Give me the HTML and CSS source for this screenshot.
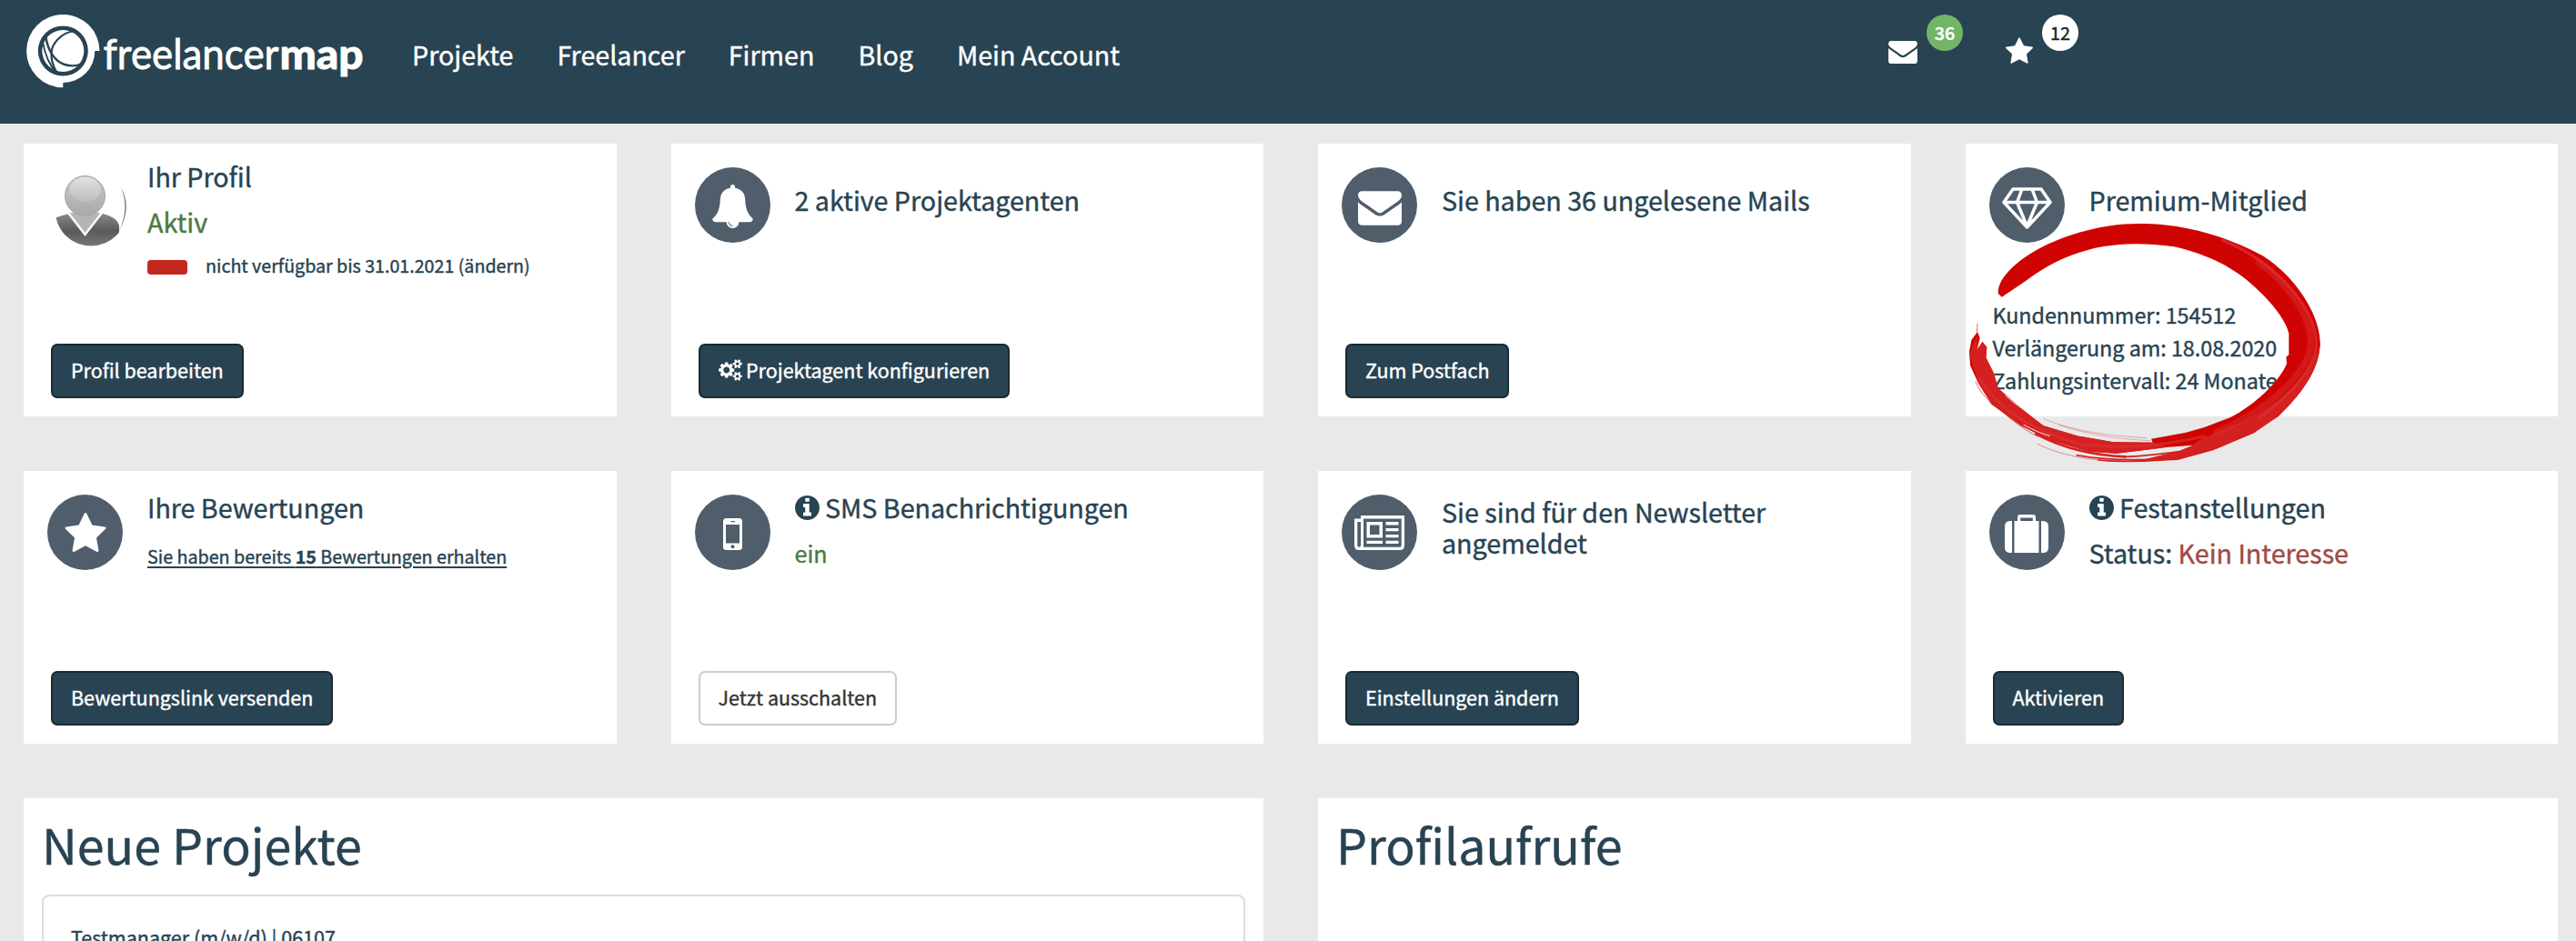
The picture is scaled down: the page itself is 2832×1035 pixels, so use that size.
FILE: index.html
```
<!DOCTYPE html>
<html lang="de">
<head>
    <meta charset="UTF-8">
    <meta name="viewport" content="width=device-width, initial-scale=1.0">
    <title>freelancermap - Mein Account</title>
    <link rel="stylesheet" href="styles.css">
</head>
<body>
    <svg class="symbols" aria-hidden="true">
        <symbol id="icon-envelope" viewBox="0 256 1792 1408"><path d="M1792 710v794q0 66-47 113t-113 47h-1472q-66 0-113-47t-47-113v-794q44 49 101 87 362 246 497 345 57 42 92.5 65.5t94.5 48 110 24.5h2q51 0 110-24.5t94.5-48 92.5-65.5q170-123 498-345 57-39 100-87zm0-294q0 79-49 151t-122 123q-376 261-468 325-10 7-42.5 31t-54 38.5-52 32.5-57.5 27-50 9h-2q-23 0-50-9t-57.5-27-52-32.5-54-38.5-42.5-31q-91-64-262-182.5t-205-142.5q-62-42-117-115.5t-55-136.5q0-78 41.5-130t118.5-52h1472q65 0 112.5 47t47.5 113z"/></symbol>
        <symbol id="icon-star" viewBox="64 32 1664 1587"><path d="M1728 647q0 22-26 48l-363 354 86 500q1 7 1 20 0 21-10.5 35.5t-30.5 14.5q-19 0-40-12l-449-236-449 236q-22 12-40 12-21 0-31.5-14.5t-10.5-35.5q0-6 2-20l86-500-364-354q-25-27-25-48 0-37 56-46l502-73 225-455q19-41 49-41t49 41l225 455 502 73q56 9 56 46z"/></symbol>
        <symbol id="icon-info" viewBox="128 128 1536 1536"><path d="M1152 1376v-160q0-14-9-23t-23-9h-96v-512q0-14-9-23t-23-9h-320q-14 0-23 9t-9 23v160q0 14 9 23t23 9h96v320h-96q-14 0-23 9t-9 23v160q0 14 9 23t23 9h448q14 0 23-9t9-23zm-128-896v-160q0-14-9-23t-23-9h-192q-14 0-23 9t-9 23v160q0 14 9 23t23 9h192q14 0 23-9t9-23zm640 416q0 209-103 385.5t-279.5 279.5-385.5 103-385.5-103-279.5-279.5-103-385.5 103-385.5 279.5-279.5 385.5-103 385.5 103 279.5 279.5 103 385.5z"/></symbol>
    </svg>

    <div class="page">
        <header class="header">
            <a class="logo" href="#">
                <svg width="380" height="90" viewBox="0 0 380 90">
                    <path fill="#fff" fill-rule="evenodd" d="M40.300 80.300A40.200 40.200 0 1 1 80.500 40H75.300A35 35 0 0 1 40.300 75ZM40.300 12.500a27.500 27.500 0 1 0 0 55a27.500 27.500 0 1 0 0-55Z"/>
                    <circle cx="40.300" cy="40" r="23" fill="#fff"/>
                    <g fill="none" stroke="#284352">
                        <path stroke-width="2.200" d="M53 18C38 20 28 32 27.500 42C27 52 30 58 33 63"/>
                        <path stroke-width="2.400" d="M21 22C23 40 32 52 42 55C49 57 55 57 61 54"/>
                        <path stroke-width="1.800" d="M18 30C20 42 24 54 33 64"/>
                    </g>
                    <g fill="#fff" class="logo-text">
                        <text x="84.500" y="60" font-size="47" textLength="193" lengthAdjust="spacingAndGlyphs" class="logo-thin">freelancer</text>
                        <text x="278.500" y="60" font-size="46" textLength="92" lengthAdjust="spacingAndGlyphs" class="logo-fat">map</text>
                    </g>
                </svg>
            </a>
            <nav class="nav">
                <a href="#">Projekte</a>
                <a href="#">Freelancer</a>
                <a href="#">Firmen</a>
                <a href="#">Blog</a>
                <a href="#">Mein Account</a>
            </nav>
            <div class="notifications">
                <a class="notification" href="#">
                    <svg class="icon-mail" width="32" height="25"><use href="#icon-envelope"/></svg>
                    <span class="badge badge-green">36</span>
                </a>
                <a class="notification" href="#">
                    <svg class="icon-fav" width="30" height="29"><use href="#icon-star"/></svg>
                    <span class="badge">12</span>
                </a>
            </div>
        </header>

        <main class="dashboard">
            <section class="card">
                <div class="card-head">
                    <svg class="avatar" width="88" height="88" viewBox="0 0 88 88">
                        <defs>
                            <clipPath id="avatarClip"><circle cx="48" cy="47" r="39.500"/></clipPath>
                            <linearGradient id="headFill" x1="0" y1="0" x2="0" y2="1">
                                <stop offset="0" stop-color="#c9c9c9"/>
                                <stop offset="1" stop-color="#a9a9a9"/>
                            </linearGradient>
                            <linearGradient id="bodyFill" x1="0" y1="0" x2="0" y2="1">
                                <stop offset="0" stop-color="#8b8b8b"/>
                                <stop offset=".5" stop-color="#5a5a5a"/>
                                <stop offset="1" stop-color="#7d7d7d"/>
                            </linearGradient>
                            <linearGradient id="shineFill" x1="0" y1="0" x2="0" y2="1">
                                <stop offset="0" stop-color="#e2e2e2"/>
                                <stop offset="1" stop-color="#bdbdbd"/>
                            </linearGradient>
                        </defs>
                        <g clip-path="url(#avatarClip)">
                            <path fill="url(#bodyFill)" d="M5 58C12 53 20 53 26 50H58C66 53 76 54 79 64V90H5Z"/>
                            <path fill="#b5b5b5" stroke="#fff" stroke-width="2.500" d="M23 50L41.500 74L60 50"/>
                        </g>
                        <circle cx="41.500" cy="31.500" r="22" fill="url(#headFill)" stroke="#a5a5a5"/>
                        <ellipse cx="41.500" cy="24.500" rx="17" ry="13.500" fill="url(#shineFill)"/>
                        <path fill="#7a7a7a" d="M81 22Q93.500 44 79 70Q90.500 45 81 22Z"/>
                    </svg>
                    <div class="card-text text-profile">
                        <h3>Ihr Profil</h3>
                        <h3 class="green">Aktiv</h3>
                        <div class="availability">
                            <span class="pill"></span>
                            <span>nicht verfügbar bis 31.01.2021 (ändern)</span>
                        </div>
                    </div>
                </div>
                <a class="btn" href="#">Profil bearbeiten</a>
            </section>

            <section class="card">
                <div class="card-head">
                    <span class="circle">
                        <svg class="low" width="45" height="48" viewBox="64 0 1664 1792"><path d="M912 1696q0-16-16-16-59 0-101.500-42.500t-42.500-101.500q0-16-16-16t-16 16q0 73 51.500 124.500t124.500 51.500q16 0 16-16zm816-288q0 52-38 90t-90 38h-448q0 106-75 181t-181 75-181-75-75-181h-448q-52 0-90-38t-38-90q50-42 91-88t85-119.500 74.500-158.500 50-206 19.500-260q0-152 117-282.500t307-158.500q-8-19-8-39 0-40 28-68t68-28 68 28 28 68q0 20-8 39 190 28 307 158.500t117 282.500q0 139 19.500 260t50 206 74.500 158.500 85 119.500 91 88z"/></svg>
                    </span>
                    <div class="card-text text-single"><h3>2 aktive Projektagenten</h3></div>
                </div>
                <a class="btn" href="#"><svg class="cogs" width="26" height="24" viewBox="-64 0 1920 1792"><path d="M832 896q0-106-75-181t-181-75-181 75-75 181 75 181 181 75 181-75 75-181zm768 512q0-52-38-90t-90-38-90 38-38 90q0 53 37.500 90.500t90.500 37.500 90.500-37.500 37.500-90.500zm0-1024q0-52-38-90t-90-38-90 38-38 90q0 53 37.500 90.500t90.500 37.500 90.500-37.500 37.500-90.500zm-384 421v185q0 10-7 19.500t-16 10.500l-155 24q-11 35-32 76 34 48 90 115 7 11 7 20 0 12-7 19-23 30-82.500 89.500t-78.500 59.500q-11 0-21-7l-115-90q-37 19-77 31-11 108-23 155-7 24-30 24h-186q-11 0-20-7.500t-10-17.500l-23-153q-34-10-75-31l-118 89q-7 7-20 7-11 0-21-8-144-133-144-160 0-9 7-19 10-14 41-53t47-61q-23-44-35-82l-152-24q-10-1-17-9.500t-7-19.500v-185q0-10 7-19.500t16-10.500l155-24q11-35 32-76-34-48-90-115-7-11-7-20 0-12 7-20 22-30 82-89t79-59q11 0 21 7l115 90q34-18 77-32 11-108 23-154 7-24 30-24h186q11 0 20 7.500t10 17.500l23 153q34 10 75 31l118-89q8-7 20-7 11 0 21 8 144 133 144 160 0 8-7 19-12 16-42 54t-45 60q23 48 34 82l152 23q10 2 17 10.500t7 19.500zm640 533v140q0 16-149 31-12 27-30 52 51 113 51 138 0 4-4 7-122 71-124 71-8 0-46-47t-52-68q-20 2-30 2t-30-2q-14 21-52 68t-46 47q-2 0-124-71-4-3-4-7 0-25 51-138-18-25-30-52-149-15-149-31v-140q0-16 149-31 13-29 30-52-51-113-51-138 0-4 4-7 4-2 35-20t59-34 30-16q8 0 46 46.500t52 67.500q20-2 30-2t30 2q51-71 92-112l6-2q4 0 124 70 4 3 4 7 0 25-51 138 17 23 30 52 149 15 149 31zm0-1024v140q0 16-149 31-12 27-30 52 51 113 51 138 0 4-4 7-122 71-124 71-8 0-46-47t-52-68q-20 2-30 2t-30-2q-14 21-52 68t-46 47q-2 0-124-71-4-3-4-7 0-25 51-138-18-25-30-52-149-15-149-31v-140q0-16 149-31 13-29 30-52-51-113-51-138 0-4 4-7 4-2 35-20t59-34 30-16q8 0 46 46.500t52 67.500q20-2 30-2t30 2q51-71 92-112l6-2q4 0 124 70 4 3 4 7 0 25-51 138 17 23 30 52 149 15 149 31z"/></svg>Projektagent konfigurieren</a>
            </section>

            <section class="card">
                <div class="card-head">
                    <span class="circle"><svg class="lower" width="48" height="38"><use href="#icon-envelope"/></svg></span>
                    <div class="card-text text-single"><h3>Sie haben 36 ungelesene Mails</h3></div>
                </div>
                <a class="btn" href="#">Zum Postfach</a>
            </section>

            <section class="card card-premium">
                <div class="card-head">
                    <span class="circle">
                        <svg class="lower" width="55" height="46" viewBox="0 0 55 46">
                            <path fill="none" stroke="#fff" stroke-width="3.500" stroke-linejoin="round" d="M12 2H43L53 16.500L27.500 44L2 16.500ZM2 16.500H53M22 2L16.500 16.500L27.500 43L38.500 16.500L33 2"/>
                        </svg>
                    </span>
                    <div class="card-text text-single"><h3>Premium-Mitglied</h3></div>
                </div>
                <div class="premium-info">
                    <div>Kundennummer: 154512</div>
                    <div>Verlängerung am: 18.08.2020</div>
                    <div>Zahlungsintervall: 24 Monate</div>
                </div>
                <!-- brush stroke marker around the customer data -->
                <svg class="marker" width="420" height="290" viewBox="0 0 1260 870">
                    <path fill="#d00303" d="M152 290L140 278C138 215 235 145 320 109C420 66 520 46 620 48C760 50 900 92 1012 154C1120 222 1200 345 1202 440C1202 535 1130 620 1064 684L1020 708L985 738L850 795L730 828L600 832L740 797L784 779L700 785L600 798L530 806L440 800L310 762L215 714L120 645L75 575L48 515L45 470L52 432L72 405L80 425L70 465L88 438L103 455L100 490L125 540L140 590L165 620L220 660L250 690L290 715L400 748L520 769L650 770L645 758L760 737L820 720L905 688C990 645 1070 565 1092 510L1090 488L1099 480V410C1090 370 1050 315 990 260C905 180 810 145 720 124C620 110 540 112 460 128C350 155 280 200 230 238Z"/>
                    <path fill="#d42020" d="M46 480L72 412L70 465L88 438L103 455L100 490L125 540L140 590L220 660L290 715L400 748L520 769L650 770L700 785L530 806L440 800L310 762L215 714L120 645L75 575Z"/>
                    <path fill="#d42020" d="M600 832L730 828L850 795L985 738L1064 684C1130 620 1202 535 1202 440C1170 560 1040 670 900 720C820 752 790 766 784 779L740 797Z"/>
                    <g fill="none" stroke="#da3434" stroke-linecap="round">
                        <path stroke-width="9" opacity=".7" d="M880 102C1030 165 1180 300 1190 440C1188 520 1110 610 1000 690"/>
                        <path stroke-width="22" opacity=".45" d="M1000 175C1100 250 1170 350 1172 440C1168 540 1030 665 860 735"/>
                        <path stroke-width="9" opacity=".6" d="M80 560C130 650 260 740 420 777C540 792 660 785 820 750"/>
                    </g>
                    <g fill="none" stroke="#d42020" stroke-linecap="round">
                        <path stroke-width="2" d="M72 378L70 405M66 570C80 605 100 620 120 645M150 665C200 710 240 735 270 750"/>
                        <path stroke-width="8" d="M265 742C340 782 440 812 560 817"/>
                        <path stroke-width="2" opacity=".7" d="M270 775C340 810 440 832 560 833"/>
                        <path stroke-width="5" d="M400 812C480 828 600 830 720 822M560 817C620 816 680 808 740 800M470 828C530 834 600 834 680 828"/>
                        <path stroke-width="2" opacity=".5" d="M290 692C370 725 480 748 630 755M340 712C430 742 520 758 640 764"/>
                        <path stroke-width="1.500" opacity=".6" d="M1010 152Q1040 170 1065 195"/>
                    </g>
                    <path fill="none" stroke="#ededed" stroke-width="3" stroke-linecap="round" d="M225 712C255 728 285 742 310 748M165 615Q190 640 222 660"/>
                </svg>
            </section>

            <section class="card">
                <div class="card-head">
                    <span class="circle"><svg width="46" height="43"><use href="#icon-star"/></svg></span>
                    <div class="card-text">
                        <h3>Ihre Bewertungen</h3>
                        <a class="rating-link" href="#">Sie haben bereits <b>15</b> Bewertungen erhalten</a>
                    </div>
                </div>
                <a class="btn" href="#">Bewertungslink versenden</a>
            </section>

            <section class="card">
                <div class="card-head">
                    <span class="circle">
                        <svg class="low" width="21" height="35" viewBox="0 0 21 35"><path fill-rule="evenodd" d="M3.500 0h14a3.500 3.500 0 0 1 3.500 3.500v28a3.500 3.500 0 0 1-3.500 3.500h-14a3.500 3.500 0 0 1-3.500-3.500v-28a3.500 3.500 0 0 1 3.500-3.500zM8.500 3v1.300h4.500V3zM3 7v20.500h15V7zM10.500 29.200a2 2 0 1 0 .01 0z"/></svg>
                    </span>
                    <div class="card-text">
                        <h3><svg class="info" width="27" height="27"><use href="#icon-info"/></svg>SMS Benachrichtigungen</h3>
                        <p class="status green">ein</p>
                    </div>
                </div>
                <a class="btn btn-default" href="#">Jetzt ausschalten</a>
            </section>

            <section class="card">
                <div class="card-head">
                    <span class="circle">
                        <svg width="55" height="38" viewBox="0 0 55 38"><path fill-rule="evenodd" d="M7 0H55V33Q55 38 50 38H5Q0 38 0 33V3.500H7ZM10 3.500V33.500Q10 34 9.800 34.800H50Q51.700 34.800 51.700 33V3.500ZM3.300 7V33Q3.300 34.800 5 34.800Q7 34.800 7 33V7Z"/><path fill-rule="evenodd" d="M13.500 7H31V24.500H13.500ZM17 10.500V21H27.500V10.500ZM34.500 7H48.500V10.500H34.500ZM34.500 14H48.500V17.300H34.500ZM34.500 21H48.500V24.300H34.500ZM13.500 27.800H31V31H13.500ZM34.500 27.800H48.500V31H34.500Z"/></svg>
                    </span>
                    <div class="card-text text-newsletter"><h3>Sie sind für den Newsletter<br>angemeldet</h3></div>
                </div>
                <a class="btn" href="#">Einstellungen ändern</a>
            </section>

            <section class="card">
                <div class="card-head">
                    <span class="circle">
                        <svg class="low" width="48" height="42" viewBox="0 0 48 42"><path fill-rule="evenodd" d="M10.500 7H14V3Q14 0 17 0H31Q34 0 34 3V7H37.500V42H10.500ZM17.200 3.400V7H30.800V3.400ZM8 7V42H6Q0 42 0 36V13Q0 7 6 7ZM40 7H42Q48 7 48 13V36Q48 42 42 42H40Z"/></svg>
                    </span>
                    <div class="card-text">
                        <h3><svg class="info" width="27" height="27"><use href="#icon-info"/></svg>Festanstellungen</h3>
                        <h3>Status: <span class="red">Kein Interesse</span></h3>
                    </div>
                </div>
                <a class="btn" href="#">Aktivieren</a>
            </section>

            <section class="panel">
                <h1>Neue Projekte</h1>
                <div class="project-list">
                    <a class="project" href="#">Testmanager (m/w/d) | 06107</a>
                </div>
            </section>

            <section class="panel">
                <h1>Profilaufrufe</h1>
            </section>
        </main>
    </div>
</body>
</html>
```
FILE: styles.css
```
* {
    box-sizing: border-box;
}
body {
    margin: 0;
    background-color: #e9e9e9;
    color: #284352;
    font-family: "Noto Sans CJK SC", "Open Sans", sans-serif;
    font-size: 23.28px;
    -webkit-text-stroke: 0.4px;
}
a {
    color: inherit;
    text-decoration: none;
}
svg {
    display: block;
    flex-shrink: 0;
}
.symbols {
    display: none;
}
.page {
    height: 100vh;
    overflow: hidden;
}

/* Header */
.header {
    display: flex;
    align-items: flex-start;
    height: 136px;
    padding: 0 547px 0 29px;
    background-color: #284352;
    color: #fff;
}
.logo {
    padding-top: 16px;
}
.logo-text {
    font-family: "Lato", sans-serif;
    stroke: #fff;
    stroke-width: 0.8px;
}
.logo-thin {
    font-weight: 400;
}
.logo-fat {
    font-weight: 900;
}
.nav {
    display: flex;
    gap: 48px;
    margin-left: 44px;
    padding-top: 40px;
    font-size: 28.65px;
    line-height: 40px;
}
.notifications {
    display: flex;
    gap: 47px;
    margin-left: auto;
    padding-top: 16px;
}
.notification {
    display: flex;
    gap: 10px;
}
.notification svg {
    fill: #fff;
}
.icon-mail {
    margin-top: 29px;
}
.icon-fav {
    margin-top: 25px;
}
.badge {
    width: 40px;
    height: 40px;
    border-radius: 50%;
    background-color: #fff;
    color: #222;
    font-size: 19.7px;
    line-height: 39px;
    text-align: center;
}
.badge-green {
    background-color: #72b566;
    color: #fff;
    font-weight: 500;
}

/* Dashboard cards */
.dashboard {
    display: grid;
    grid-template-columns: repeat(4, 1fr);
    gap: 60px;
    padding: 22px 20px 0 26px;
}
.card {
    display: flex;
    flex-direction: column;
    justify-content: space-between;
    align-items: flex-start;
    height: 300px;
    padding: 0 30px 20px;
    background-color: #fff;
}
.card-head {
    display: flex;
    margin-left: -4px;
}
.circle {
    display: flex;
    justify-content: center;
    align-items: center;
    width: 83px;
    height: 83px;
    margin-top: 26px;
    border-radius: 50%;
    background-color: #505e6c;
    flex-shrink: 0;
}
.circle svg {
    fill: #fff;
}
.circle .low {
    margin-top: 3px;
}
.circle .lower {
    margin-top: 6px;
}
.avatar {
    margin: 26px -5px 0 0;
}
.card-text {
    margin: 23px 0 0 27px;
}
.text-profile {
    margin-top: 18.5px;
}
.text-single {
    margin-top: 45px;
}
.text-newsletter {
    margin-top: 27.5px;
}
h3 {
    display: flex;
    margin: 0 0 17px;
    font-size: 28.65px;
    font-weight: 400;
    line-height: 33px;
    white-space: pre;
}
.text-newsletter h3 {
    display: block;
    line-height: 34px;
}
.info {
    margin: 4px 6.5px 0 0;
    fill: #284352;
}
.availability {
    display: flex;
    gap: 20px;
    font-size: 19.65px;
    line-height: 30px;
}
.pill {
    width: 44px;
    height: 16px;
    margin-top: 9.5px;
    border-radius: 4px;
    background-color: #c3281c;
}
.rating-link {
    display: block;
    margin-top: 23px;
    font-size: 19.7px;
    line-height: 30px;
    text-decoration: underline;
    text-decoration-thickness: 1.5px;
    text-underline-offset: 3px;
}
.status {
    margin: 18px 0 0;
    font-size: 25.07px;
    line-height: 33px;
}
.green {
    color: #4a7a41;
}
.red {
    color: #a04a45;
}
.btn {
    display: flex;
    align-items: center;
    height: 60px;
    padding: 0 20px 2px;
    border: 2px solid #1c2a33;
    border-radius: 7px;
    background-color: #284352;
    color: #fff;
    font-size: 21.49px;
    line-height: 54px;
    fill: #fff;
}
.btn-default {
    border-color: #ccc;
    background-color: #fff;
    color: #333;
}
.cogs {
    margin-right: 4.5px;
}
.card-premium {
    position: relative;
    justify-content: flex-start;
}
.premium-info {
    margin-top: 61px;
    line-height: 36px;
}
.marker {
    position: absolute;
    top: 72px;
    left: -11px;
    z-index: 1;
}

/* Bottom panels */
.panel {
    grid-column: span 2;
    height: 300px;
    padding: 20px 20px 0;
    background-color: #fff;
}
h1 {
    margin: 0 0 26px;
    font-size: 53.7px;
    font-weight: 400;
    line-height: 60px;
}
.project-list {
    height: 300px;
    padding: 30px;
    border: 2px solid #ddd;
    border-radius: 8px;
}
.project {
    display: block;
    font-size: 21.49px;
    line-height: 30px;
}
```
